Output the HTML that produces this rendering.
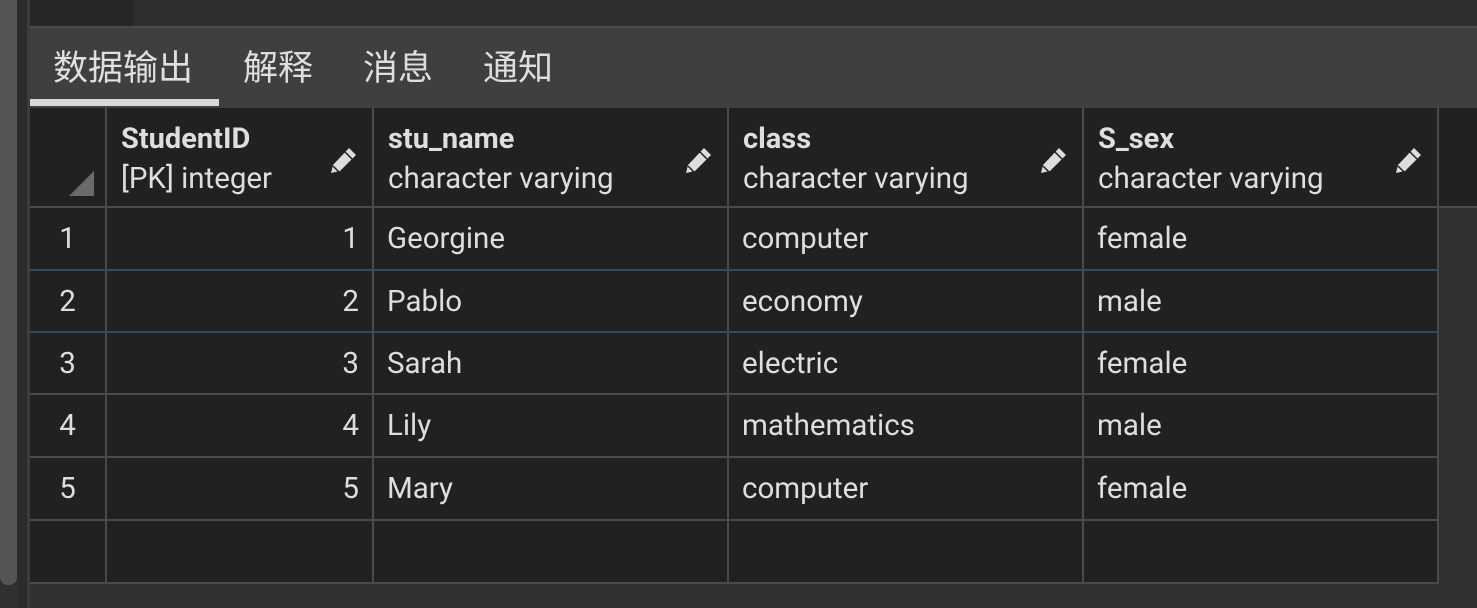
<!DOCTYPE html><html><head><meta charset="utf-8"><style>
body{margin:0;width:1477px;height:608px;background:#303030;position:relative;overflow:hidden;font-family:"Roboto","Liberation Sans","Noto Sans CJK SC",sans-serif;color:#dedede}
div{position:absolute;box-sizing:border-box}
.c{background:#212121;border-right:2px solid #4a4a4a;border-bottom:2px solid #4a4a4a;font-size:29.5px;line-height:62px;padding:0 13px;white-space:nowrap}
.r{text-align:right}
.h1{font-weight:bold;font-size:29px;top:15px;left:15px;line-height:32px}
.h2{font-size:29.5px;top:55px;left:15px;line-height:32px}
</style></head><body>
<div style="left:0;top:0;width:17px;height:585px;background:#555;border-radius:0 0 8px 8px"></div>
<div style="left:17px;top:0;width:10px;height:608px;background:#2b2b2b"></div>
<div style="left:27px;top:0;width:3px;height:608px;background:#3c3c3c"></div>
<div style="left:30px;top:0;width:103px;height:26px;background:#262626"></div>
<div style="left:133px;top:0;width:1344px;height:26px;background:#2e2e2e"></div>
<div style="left:30px;top:26px;width:1447px;height:82px;background:#3f3f3f;border-top:2px solid #4a4a4a"></div>
<div style="left:53px;top:46px;font-size:35px;line-height:46px;color:#e0e0e0">数据输出</div>
<div style="left:243px;top:46px;font-size:35px;line-height:46px">解释</div>
<div style="left:363px;top:46px;font-size:35px;line-height:46px">消息</div>
<div style="left:483px;top:46px;font-size:35px;line-height:46px">通知</div>
<div style="left:30px;top:99px;width:189px;height:7px;background:#d8d8d8"></div>
<div style="left:30px;top:108px;width:1447px;height:100px;background:#212121;border-bottom:2px solid #4a4a4a"></div>
<div style="left:30px;top:108px;width:77px;height:100px;border-right:2px solid #4a4a4a"></div>
<div style="left:69px;top:171px;width:0;height:0;border-left:25px solid transparent;border-bottom:25px solid #6a6a6a"></div>
<div style="left:106px;top:108px;width:268px;height:100px;border-right:2px solid #4a4a4a"><div class="h1">StudentID</div><div class="h2">[PK] integer</div><svg style="position:absolute;left:222px;top:37px" width="30" height="30" viewBox="0 0 30 30"><path d="M3 28 L5 20 L21 3 L28 10 L12 26 Z" fill="#ddd"/><path d="M5 21 L11 27" stroke="#212121" stroke-width="1.5"/><path d="M17 7 L24 14" stroke="#212121" stroke-width="1.5"/></svg></div>
<div style="left:373px;top:108px;width:356px;height:100px;border-right:2px solid #4a4a4a"><div class="h1">stu_name</div><div class="h2">character varying</div><svg style="position:absolute;left:310px;top:37px" width="30" height="30" viewBox="0 0 30 30"><path d="M3 28 L5 20 L21 3 L28 10 L12 26 Z" fill="#ddd"/><path d="M5 21 L11 27" stroke="#212121" stroke-width="1.5"/><path d="M17 7 L24 14" stroke="#212121" stroke-width="1.5"/></svg></div>
<div style="left:728px;top:108px;width:356px;height:100px;border-right:2px solid #4a4a4a"><div class="h1">class</div><div class="h2">character varying</div><svg style="position:absolute;left:310px;top:37px" width="30" height="30" viewBox="0 0 30 30"><path d="M3 28 L5 20 L21 3 L28 10 L12 26 Z" fill="#ddd"/><path d="M5 21 L11 27" stroke="#212121" stroke-width="1.5"/><path d="M17 7 L24 14" stroke="#212121" stroke-width="1.5"/></svg></div>
<div style="left:1083px;top:108px;width:356px;height:100px;border-right:2px solid #4a4a4a"><div class="h1">S_sex</div><div class="h2">character varying</div><svg style="position:absolute;left:310px;top:37px" width="30" height="30" viewBox="0 0 30 30"><path d="M3 28 L5 20 L21 3 L28 10 L12 26 Z" fill="#ddd"/><path d="M5 21 L11 27" stroke="#212121" stroke-width="1.5"/><path d="M17 7 L24 14" stroke="#212121" stroke-width="1.5"/></svg></div>

<div class="c" style="left:30px;top:208px;width:77px;height:63px;text-align:center;padding:0">1</div><div class="c r" style="left:107px;top:208px;width:267px;height:63px">1</div><div class="c" style="left:374px;top:208px;width:355px;height:63px">Georgine</div><div class="c" style="left:729px;top:208px;width:355px;height:63px">computer</div><div class="c" style="left:1084px;top:208px;width:355px;height:63px">female</div>
<div class="c" style="left:30px;top:271px;width:77px;height:62px;text-align:center;padding:0">2</div><div class="c r" style="left:107px;top:271px;width:267px;height:62px">2</div><div class="c" style="left:374px;top:271px;width:355px;height:62px">Pablo</div><div class="c" style="left:729px;top:271px;width:355px;height:62px">economy</div><div class="c" style="left:1084px;top:271px;width:355px;height:62px">male</div>
<div style="left:30px;top:269px;width:1408px;height:2px;background:#25506e"></div>
<div style="left:30px;top:331px;width:1408px;height:2px;background:#25506e"></div>
<div class="c" style="left:30px;top:333px;width:77px;height:62px;text-align:center;padding:0">3</div><div class="c r" style="left:107px;top:333px;width:267px;height:62px">3</div><div class="c" style="left:374px;top:333px;width:355px;height:62px">Sarah</div><div class="c" style="left:729px;top:333px;width:355px;height:62px">electric</div><div class="c" style="left:1084px;top:333px;width:355px;height:62px">female</div>
<div class="c" style="left:30px;top:395px;width:77px;height:63px;text-align:center;padding:0">4</div><div class="c r" style="left:107px;top:395px;width:267px;height:63px">4</div><div class="c" style="left:374px;top:395px;width:355px;height:63px">Lily</div><div class="c" style="left:729px;top:395px;width:355px;height:63px">mathematics</div><div class="c" style="left:1084px;top:395px;width:355px;height:63px">male</div>
<div class="c" style="left:30px;top:458px;width:77px;height:63px;text-align:center;padding:0">5</div><div class="c r" style="left:107px;top:458px;width:267px;height:63px">5</div><div class="c" style="left:374px;top:458px;width:355px;height:63px">Mary</div><div class="c" style="left:729px;top:458px;width:355px;height:63px">computer</div><div class="c" style="left:1084px;top:458px;width:355px;height:63px">female</div>
<div class="c" style="left:30px;top:521px;width:77px;height:63px"></div><div class="c" style="left:107px;top:521px;width:267px;height:63px"></div><div class="c" style="left:374px;top:521px;width:355px;height:63px"></div><div class="c" style="left:729px;top:521px;width:355px;height:63px"></div><div class="c" style="left:1084px;top:521px;width:355px;height:63px"></div>
</body></html>
